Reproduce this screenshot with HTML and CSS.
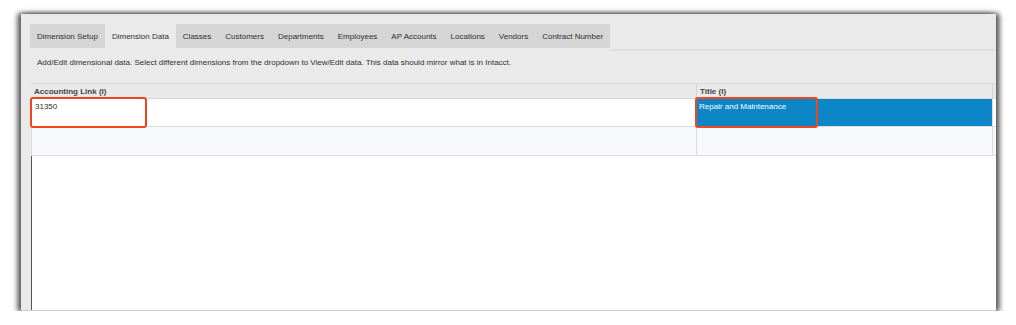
FILE: index.html
```html
<!DOCTYPE html>
<html>
<head>
<meta charset="utf-8">
<link rel="stylesheet" href="styles.css">
</head>
<body>
<div class="page">
  <div class="window">
    <div class="tabbar">
      <div class="tab">Dimension Setup</div>
      <div class="tab active">Dimension Data</div>
      <div class="tab">Classes</div>
      <div class="tab">Customers</div>
      <div class="tab">Departments</div>
      <div class="tab">Employees</div>
      <div class="tab">AP Accounts</div>
      <div class="tab">Locations</div>
      <div class="tab">Vendors</div>
      <div class="tab">Contract Number</div>
      <div class="tab-fill"></div>
    </div>
    <div class="panel">Add/Edit dimensional data. Select different dimensions from the dropdown to View/Edit data. This data should mirror what is in Intacct.</div>
    <div class="grid">
      <div class="row head">
        <div class="cell c1">Accounting Link (I)</div>
        <div class="cell c2">Title (I)</div>
        <div class="cell c3"></div>
      </div>
      <div class="row r1">
        <div class="cell c1">31350</div>
        <div class="cell c2 selected">Repair and Maintenance</div>
        <div class="cell c3"></div>
      </div>
      <div class="row r2">
        <div class="cell c1"></div>
        <div class="cell c2"></div>
        <div class="cell c3"></div>
      </div>
      <div class="grid-body"></div>
      <div class="mark mark1"></div>
      <div class="mark mark2"></div>
    </div>
  </div>
</div>
</body>
</html>
```
FILE: styles.css
```css
html, body {
  margin: 0;
  padding: 0;
  background: #ffffff;
}
.page {
  padding: 14px 0 0 21px;
}
.window {
  width: 975px;
  height: 297px;
  background: #eaeaea;
  display: flex;
  flex-direction: column;
  font-family: "Liberation Sans", Arial, sans-serif;
  font-size: 8px;
  color: #2f2f2f;
  box-shadow: 0 0 4px 2px rgba(0, 0, 0, 0.28), 4px 0 5px rgba(0, 0, 0, 0.5), -4px 0 5px rgba(0, 0, 0, 0.5);
  border-bottom: 1px solid #cfcfcf;
  box-sizing: border-box;
}
.tabbar {
  display: flex;
  margin: 10px 0 0 9px;
  height: 24px;
}
.tab {
  padding: 0 7px;
  background: #d5d5d5;
  display: flex;
  align-items: center;
  white-space: nowrap;
}
.tab.active {
  background: #eaeaea;
}
.tab-fill {
  flex: 1;
  border-bottom: 2px solid #dedede;
  height: 25px;
}
.panel {
  height: 35px;
  box-sizing: border-box;
  padding: 10px 0 0 16px;
}
.grid {
  position: relative;
  flex: 1;
  margin-left: 10px;
  display: flex;
  flex-direction: column;
  border-top: 1px solid #d9d9d9;
}
.row {
  display: flex;
}
.cell {
  box-sizing: border-box;
  padding: 3px 0 0 3px;
  border-right: 1px solid #dcdcdc;
  white-space: nowrap;
}
.c1 {
  width: 666px;
}
.c2 {
  width: 296px;
}
.c3 {
  flex: 1;
  border-right: none;
}
.head {
  height: 15px;
  background: #e9e9e9;
  border-bottom: 1px solid #d8d8d8;
  box-sizing: border-box;
}
.head .cell {
  padding-top: 3px;
  font-weight: bold;
  color: #444;
  border-right-color: #d4d4d4;
}
.r1 {
  height: 28px;
  background: #ffffff;
  border-bottom: 1px solid #dcdcdc;
  box-sizing: border-box;
  border-left: 1px solid #dcdcdc;
}
.r1 .c1 {
  width: 665px;
}
.selected {
  background: #0d86c8;
  color: #ffffff;
  padding-left: 2px;
}
.r2 {
  height: 29px;
  background: #f8f9fc;
  border-bottom: 1px solid #dcdcdc;
  box-sizing: border-box;
  border-left: 1px solid #dcdcdc;
}
.r2 .c1 {
  width: 665px;
}
.grid-body {
  flex: 1;
  background: #ffffff;
  border-left: 1px solid #555;
}
.mark {
  position: absolute;
  top: 13px;
  height: 31px;
  box-sizing: border-box;
  border: 2px solid #f0461e;
  border-radius: 3px;
}
.mark1 {
  left: -1px;
  width: 117px;
}
.mark2 {
  left: 664px;
  width: 123px;
}
```
